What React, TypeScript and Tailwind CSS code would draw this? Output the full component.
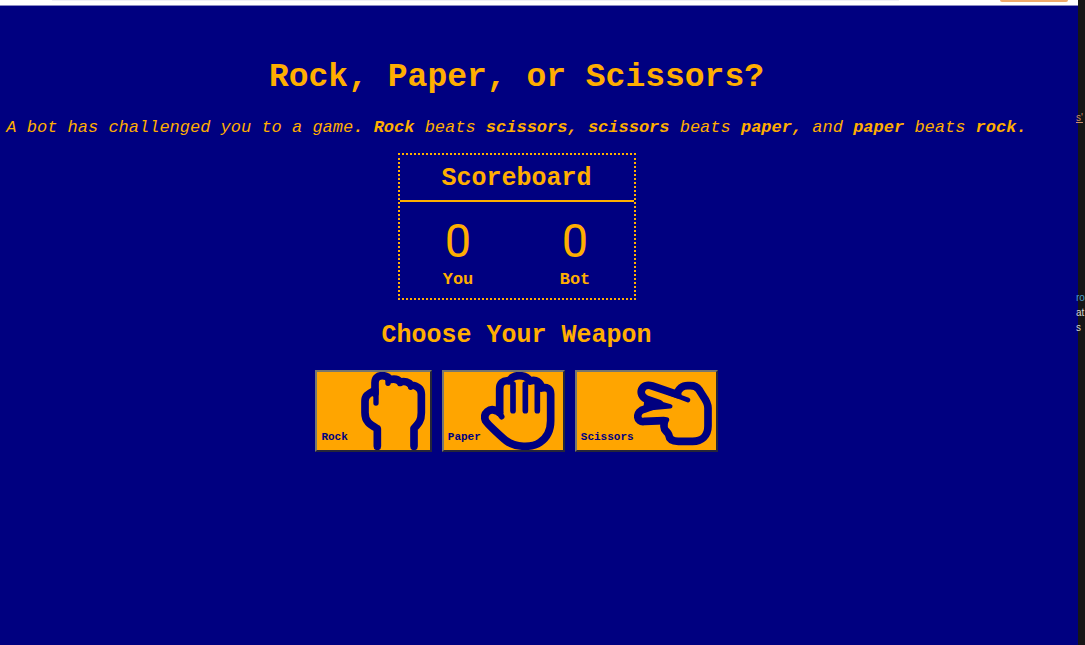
import type { ReactNode } from "react";

function HandIcon({ viewBox, children }: { viewBox: string; children: ReactNode }) {
  return (
    <svg
      viewBox={viewBox}
      className="size-[78px] shrink-0"
      fill="none"
      stroke="currentColor"
      strokeWidth={23}
      strokeLinecap="round"
      strokeLinejoin="round"
      aria-hidden="true"
    >
      {children}
    </svg>
  );
}

const weapons: { name: string; icon: ReactNode }[] = [
  {
    name: "Rock",
    icon: (
      <HandIcon viewBox="137 186 234 234">
        <path d="M225 409V356C204 344 188 336 188 308V274C188 258 196 252 212 244" />
        <path d="M218 250V218C218 203 227 197 240 197C251 197 258 201 263 209C278 205 288 209 294 216C306 212 320 216 326 225C346 227 357 237 357 252V308C357 332 349 340 335 355V409" />
        <path strokeWidth={16} d="M221 240V279M257 210V220M293 214V221M325 224V232" />
      </HandIcon>
    ),
  },
  {
    name: "Paper",
    icon: (
      <HandIcon viewBox="537 186 234 234">
        <path d="M593 308L584 303C563 292 541 310 551 333C556 342 600 382 612 392C640 413 690 414 714 397C736 382 746 362 746 332V252C746 236 735 230 718 234C716 215 702 208 684 213C678 203 666 197 652 197C638 197 627 203 622 213C602 209 593 221 593 236V308" />
        <path strokeWidth={17} d="M633 222V302M670 222V302M706 226V302M589 305L599 320" />
      </HandIcon>
    ),
  },
  {
    name: "Scissors",
    icon: (
      <HandIcon viewBox="209 36 234 234">
        <path d="M337 100C345 86 352 77 370 77H378C391 77 398 80 404 89L416 108C426 122 431 130 431 144V198C431 228 411 244 385 244H342C324 244 315 238 313 224C309 214 299 212 299 200V184" />
        <path d="M340 104L264 78C231 66 218 105 246 117L285 131L242 147C212 152 214 190 242 184L298 182" />
        <path fill="currentColor" strokeWidth={13} d="M246 119L318 139L244 146Z" />
        <path strokeWidth={14} d="M310 97L371 120M290 178L308 179L304 188" />
      </HandIcon>
    ),
  },
];

function Score({ label, value }: { label: string; value: number }) {
  return (
    <div className="flex flex-1 flex-col items-center">
      <span className="font-[Roboto,sans-serif] text-[47px] leading-[54px]">{value}</span>
      <span className="mt-0.5 text-[17px] leading-5 font-bold">{label}</span>
    </div>
  );
}

function EditorEdge() {
  return (
    <aside className="flex w-[7px] shrink-0 flex-col bg-[#161616] pt-[110px] font-['Liberation_Sans',sans-serif] text-[10px] leading-[15px] text-[#d4d4d4]">
      <div className="-ml-0.5 flex flex-col">
        <span className="text-[#ce8d6d] underline">s'</span>
        <span className="mt-[165px] text-[#4a9fc9]">ro</span>
        <span>at</span>
        <span>s</span>
      </div>
    </aside>
  );
}

export default function App() {
  return (
    <div className="flex min-h-screen bg-[#000080]">
      <div className="flex min-w-0 flex-1 flex-col">
        <header className="flex h-[6px] items-start justify-between border-b border-[#8b8bc4] bg-white pr-[10px] pl-[52px]">
          <div className="h-px w-5/6 bg-[#ededf7]" />
          <div className="h-[2px] w-[68px] rounded-b-full bg-[#efaa6c]" />
        </header>
        <main className="flex flex-col items-center pt-[52px] pr-[45px] font-['Liberation_Mono',monospace] text-[#ffae00]">
          <h1 className="text-[33px] leading-10 font-bold">Rock, Paper, or Scissors?</h1>
          <p className="mt-[18px] text-[17px] leading-6 whitespace-nowrap italic">
            A bot has challenged you to a game<b>.</b> <b>Rock</b> beats <b>scissors,</b> <b>scissors</b> beats <b>paper,</b> and <b>paper</b> beats <b>rock.</b>
          </p>
          <section className="mt-[13px] w-[238px] border-2 border-dotted border-[#ffae00] pb-2">
            <h2 className="border-b-2 border-[#ffae00] pt-[9px] pb-[6px] text-center text-[25px] leading-[30px] font-bold">Scoreboard</h2>
            <div className="flex pt-3">
              <Score label="You" value={0} />
              <Score label="Bot" value={0} />
            </div>
          </section>
          <h2 className="mt-[21px] text-[25px] leading-[30px] font-bold">Choose Your Weapon</h2>
          <div className="mt-[19px] flex gap-[10px]">
            {weapons.map(({ name, icon }) => (
              <button
                key={name}
                type="button"
                className="flex items-end border-2 border-t-[#77776f] border-r-[#26263a] border-b-[#26263a] border-l-[#77776f] bg-[#ffa500] px-1 text-[11px] font-bold text-[#000080]"
              >
                <span className="pb-[5px] leading-4">{name}</span>
                {icon}
              </button>
            ))}
          </div>
        </main>
      </div>
      <EditorEdge />
    </div>
  );
}
